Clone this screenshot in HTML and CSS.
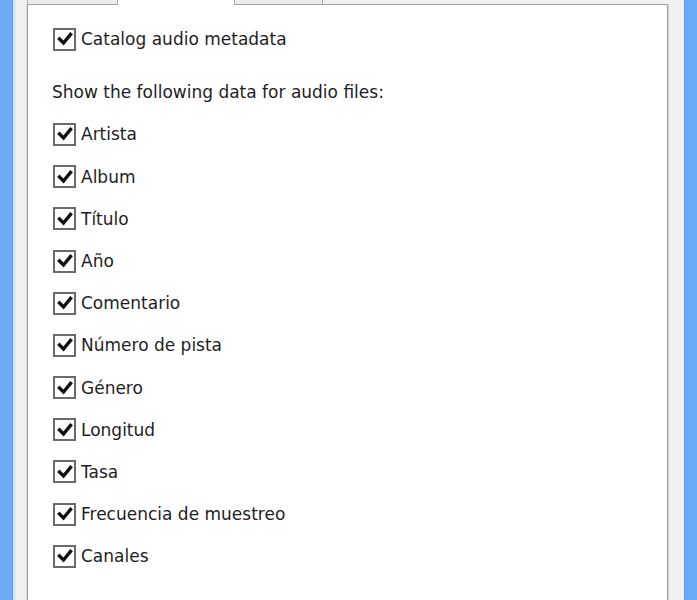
FILE: index.html
```html
<!DOCTYPE html>
<html>
<head>
<meta charset="utf-8">
<link rel="stylesheet" href="styles.css">
</head>
<body>
<div class="window">
  <div class="frame frame-left"></div>
  <div class="client">
    <div class="tabs">
      <div class="tab tab-1"></div>
      <div class="tab tab-active"></div>
      <div class="tab tab-3"></div>
      <div class="tab-fill"></div>
    </div>
    <div class="panel">
      <label class="row first">
        <span class="box"><svg viewBox="0 0 18 18" width="18" height="18"><polyline points="3.5,9 7.5,13 14.5,4.5" /></svg></span>
        <span class="text">Catalog audio metadata</span>
      </label>
      <div class="row heading"><span class="text">Show the following data for audio files:</span></div>
      <label class="row"><span class="box"><svg viewBox="0 0 18 18" width="18" height="18"><polyline points="3.5,9 7.5,13 14.5,4.5" /></svg></span><span class="text">Artista</span></label>
      <label class="row"><span class="box"><svg viewBox="0 0 18 18" width="18" height="18"><polyline points="3.5,9 7.5,13 14.5,4.5" /></svg></span><span class="text">Album</span></label>
      <label class="row"><span class="box"><svg viewBox="0 0 18 18" width="18" height="18"><polyline points="3.5,9 7.5,13 14.5,4.5" /></svg></span><span class="text">Título</span></label>
      <label class="row"><span class="box"><svg viewBox="0 0 18 18" width="18" height="18"><polyline points="3.5,9 7.5,13 14.5,4.5" /></svg></span><span class="text">Año</span></label>
      <label class="row"><span class="box"><svg viewBox="0 0 18 18" width="18" height="18"><polyline points="3.5,9 7.5,13 14.5,4.5" /></svg></span><span class="text">Comentario</span></label>
      <label class="row"><span class="box"><svg viewBox="0 0 18 18" width="18" height="18"><polyline points="3.5,9 7.5,13 14.5,4.5" /></svg></span><span class="text">Número de pista</span></label>
      <label class="row"><span class="box"><svg viewBox="0 0 18 18" width="18" height="18"><polyline points="3.5,9 7.5,13 14.5,4.5" /></svg></span><span class="text">Género</span></label>
      <label class="row"><span class="box"><svg viewBox="0 0 18 18" width="18" height="18"><polyline points="3.5,9 7.5,13 14.5,4.5" /></svg></span><span class="text">Longitud</span></label>
      <label class="row"><span class="box"><svg viewBox="0 0 18 18" width="18" height="18"><polyline points="3.5,9 7.5,13 14.5,4.5" /></svg></span><span class="text">Tasa</span></label>
      <label class="row"><span class="box"><svg viewBox="0 0 18 18" width="18" height="18"><polyline points="3.5,9 7.5,13 14.5,4.5" /></svg></span><span class="text">Frecuencia de muestreo</span></label>
      <label class="row"><span class="box"><svg viewBox="0 0 18 18" width="18" height="18"><polyline points="3.5,9 7.5,13 14.5,4.5" /></svg></span><span class="text">Canales</span></label>
    </div>
  </div>
  <div class="frame frame-right"></div>
</div>
</body>
</html>
```

FILE: styles.css
```css
html, body {
  margin: 0;
  padding: 0;
  height: 600px;
  overflow: hidden;
  background: #f0f0f0;
}

.window {
  display: flex;
  height: 600px;
  font-family: "DejaVu Sans", "Liberation Sans", sans-serif;
  font-size: 17px;
  color: #1e1e1e;
}

.frame {
  width: 13px;
  background: #6aaaf6;
  flex: none;
}

.frame-left {
  box-shadow: inset -1px 0 0 #5b9ae6;
}

.frame-right {
  box-shadow: inset 1px 0 0 #5b9ae6;
}

.client {
  flex: 1;
  display: flex;
  flex-direction: column;
  padding: 0 16px 0 11px;
  background: #f0f0f0;
  border-left: 3px solid #d4e7fb;
}

.tabs {
  display: flex;
  height: 5px;
  flex: none;
}

.tab {
  height: 4px;
  border-right: 1px solid #a9a9a9;
  border-bottom: 1px solid #a3a3a3;
  background: #ececec;
  flex: none;
}

.tab-1 {
  width: 89px;
  border-left: 1px solid #a9a9a9;
}

.tab-active {
  width: 116px;
  height: 5px;
  border-bottom: none;
  background: #ffffff;
}

.tab-3 {
  width: 87px;
}

.tab-fill {
  flex: 1;
  height: 4px;
  border-bottom: 1px solid #a3a3a3;
}

.panel {
  flex: 1;
  background: #ffffff;
  border-left: 1px solid #a0a0a0;
  border-right: 1px solid #a0a0a0;
  box-shadow: 1px 0 0 #cfcfcf, -1px 0 0 #d8d8d8;
  padding: 13px 0 0 25px;
  display: flex;
  flex-direction: column;
}

.row {
  display: flex;
  align-items: center;
  height: 42.2px;
  flex: none;
}

.row.first {
  margin-bottom: 11px;
}

.box {
  width: 19px;
  height: 19px;
  border: 2px solid #6a6a6a;
  background: #ffffff;
  display: flex;
  align-items: center;
  justify-content: center;
  flex: none;
}

.box svg polyline {
  fill: none;
  stroke: #111;
  stroke-width: 3.4;
  stroke-linecap: square;
  stroke-linejoin: miter;
}

.text {
  margin-left: 5px;
  white-space: nowrap;
}

.heading .text {
  margin-left: -1px;
}
```
